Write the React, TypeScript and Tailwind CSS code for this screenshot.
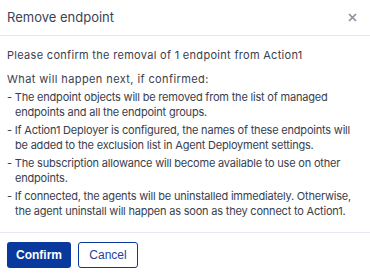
import React from 'react';

// line breaks follow the original dialog
const items: [string, string][] = [
  ['The endpoint objects will be removed from the list of managed', 'endpoints and all the endpoint groups.'],
  ['If Action1 Deployer is configured, the names of these endpoints will', 'be added to the exclusion list in Agent Deployment settings.'],
  ['The subscription allowance will become available to use on other', 'endpoints.'],
  ['If connected, the agents will be uninstalled immediately. Otherwise,', 'the agent uninstall will happen as soon as they connect to Action1.'],
];

const App: React.FC = () => {
  return (
    <div className="w-[370px] h-[275px] bg-white text-[#393e4d] font-['Inter',sans-serif] overflow-hidden">
      <div className="h-[36px] px-[7px] flex items-center justify-between border-b border-[#e6e9f0]">
        <span className="text-[13px] text-[#3d4354]">Remove endpoint</span>
        <button className="w-[14px] h-[14px] mr-[4px] flex items-center justify-center text-[#8b909c]">
          <svg width="9" height="9" viewBox="0 0 9 9" fill="none" stroke="currentColor" strokeWidth="1.7">
            <path d="M1 1L8 8M8 1L1 8" />
          </svg>
        </button>
      </div>

      <div className="px-[7px] pt-[12px] pb-[13px] text-[11px] leading-[15px] border-b border-[#e6e9f0] whitespace-nowrap">
        <p className="tracking-[0.3px]">Please confirm the removal of 1 endpoint from Action1</p>
        <p className="mt-[9px] tracking-[0.4px]">What will happen next, if confirmed:</p>
        {items.map(([a, b]) => (
          <p key={a} className="mt-[3px] tracking-[-0.2px]">
            <span className="block">- {a}</span>
            <span className="block pl-[8px]">{b}</span>
          </p>
        ))}
      </div>

      <div className="px-[7px] pt-[9px] flex gap-[7px] font-['Liberation_Sans',sans-serif] text-[12px]">
        <button className="h-[26px] w-[64px] rounded-[3px] bg-[#0a399e] text-white font-bold">
          Confirm
        </button>
        <button className="h-[26px] w-[60px] rounded-[3px] border border-[#0a399e] text-[#1f3f9a]">
          Cancel
        </button>
      </div>
    </div>
  );
};

export default App;
